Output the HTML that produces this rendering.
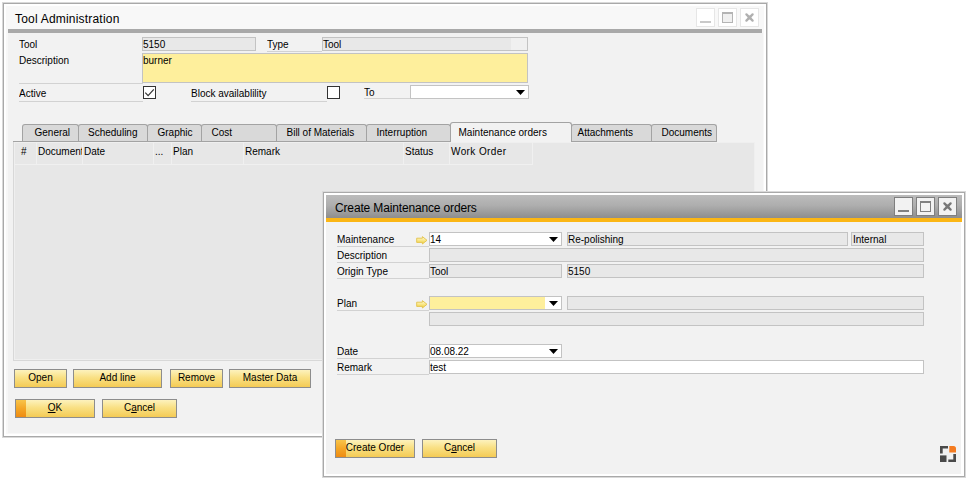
<!DOCTYPE html>
<html><head><meta charset="utf-8"><title>Tool Administration</title>
<style>
*{box-sizing:border-box;margin:0;padding:0}
html,body{width:967px;height:480px;background:#fff;overflow:hidden}
body{position:relative;font-family:"Liberation Sans",sans-serif;font-size:10px;color:#000;line-height:12px}
.a{position:absolute;white-space:nowrap}
.win{position:absolute;border:1px solid #a9a9a9;box-shadow:0 0 0 1px #d9d9d9;background:#fff}
.body{position:absolute;background:#f2f2f2}
.lbl{position:absolute;height:14px;border-bottom:1px solid #d2d2d2;padding-top:2px;white-space:nowrap;overflow:hidden}
.fld{position:absolute;height:14px;border:1px solid #c3c3c3;background:#e8e8e8;padding-left:0;padding-top:1px;white-space:nowrap;overflow:hidden}
.w{background:#fff}.y{background:#feef9c}
.btn{position:absolute;height:19px;border:1px solid #8d8d8d;background:linear-gradient(#fdf2bd 0%,#f9e084 45%,#f4cb55 100%);text-align:center;line-height:16px;white-space:nowrap}
.def:before{content:"";position:absolute;left:0;top:0;bottom:0;width:10px;background:linear-gradient(#f8c44a 0%,#f4a626 50%,#ef8c12 100%)}
.tab{position:absolute;top:124px;height:18px;text-align:left;border:1px solid #a3a3a3;border-bottom:none;border-radius:3px 3px 0 0;background:#d9d9d9;line-height:15px;white-space:nowrap}
.tab.sel{background:#f2f2f2;top:122px;height:20px;line-height:19px;z-index:2}
.arr{position:absolute;width:9px;height:5px;background:#000;clip-path:polygon(0 0,100% 0,50% 100%)}
.cb{position:absolute;width:13px;height:13px;border:1px solid #333;background:#fff}
.tb{position:absolute;width:19px;height:19px}
u{text-decoration:underline}
</style></head><body>

<!-- Window 1 -->
<div class="win" style="left:3px;top:3px;width:764px;height:434px"></div>
<div class="a" style="left:6px;top:6px;width:758px;height:428px;background:#f8f8f8"></div>
<div class="a" style="left:15px;top:12px;font-size:12px;letter-spacing:0.2px;line-height:15px">Tool Administration</div>
<div class="a" style="left:8px;top:29px;width:754px;height:4px;background:#a9a9a9"></div>
<div class="body" style="left:8px;top:33px;width:755px;height:400px"></div>
<!-- title buttons 1 -->
<div class="tb" style="left:696px;top:8px;border:1px solid #e6e6e6;background:#fff"><div class="a" style="left:3px;top:12px;width:11px;height:2px;background:#c9c9c9"></div></div>
<div class="tb" style="left:718px;top:8px;border:1px solid #e6e6e6;background:#fff"><div class="a" style="left:3px;top:3px;width:11px;height:11px;border:1px solid #b4b4b4;border-top-width:2px;background:#f0f0f0"></div></div>
<div class="tb" style="left:740px;top:8px;border:1px solid #e6e6e6;background:#fff"><svg class="a" style="left:3px;top:3px" width="11" height="11" viewBox="0 0 11 11"><path d="M2.4 2.4 L8.6 8.6 M8.6 2.4 L2.4 8.6" stroke="#b0b0b0" stroke-width="2.3" stroke-linecap="round"/><rect x="3.7" y="3.7" width="3.6" height="3.6" fill="#b0b0b0"/></svg></div>

<div class="lbl" style="left:19px;top:37px;width:123px;border-bottom:none">Tool</div>
<div class="fld" style="left:142px;top:37px;width:114px">5150</div>
<div class="lbl" style="left:267px;top:37px;width:55px;height:15px">Type</div>
<div class="fld" style="left:322px;top:37px;width:206px">Tool</div>
<div class="a" style="left:511px;top:38px;width:16px;height:12px;background:#f0f0f0"></div>
<div class="lbl" style="left:19px;top:53px;width:124px;height:31px">Description</div>
<div class="fld y" style="left:142px;top:53px;width:386px;height:30px">burner</div>
<div class="lbl" style="left:19px;top:85px;width:124px;height:17px;padding-top:3px">Active</div>
<div class="cb" style="left:143px;top:86px"><svg class="a" style="left:0;top:0" width="11" height="11" viewBox="0 0 11 11"><path d="M1.3 5.6 L4.1 8.6 L9.8 2.3" stroke="#333" stroke-width="1.2" fill="none"/></svg></div>
<div class="lbl" style="left:191px;top:85px;width:136px;height:17px;padding-top:3px">Block availablility</div>
<div class="cb" style="left:327px;top:86px"></div>
<div class="lbl" style="left:364px;top:85px;width:46px">To</div>
<div class="fld w" style="left:410px;top:85px;width:119px"></div>
<div class="arr" style="left:516px;top:90px"></div>

<!-- tabs -->
<div class="tab" style="left:22px;width:57px;padding-left:11.5px">General</div>
<div class="tab" style="left:78px;width:70px;padding-left:9.0px">Scheduling</div>
<div class="tab" style="left:147px;width:55px;padding-left:9.5px">Graphic</div>
<div class="tab" style="left:201px;width:76px;padding-left:9.5px">Cost</div>
<div class="tab" style="left:276px;width:91px;padding-left:9.5px">Bill of Materials</div>
<div class="tab" style="left:366px;width:85px;padding-left:9.5px">Interruption</div>
<div class="tab sel" style="left:450px;width:122px;padding-left:7.5px">Maintenance orders</div>
<div class="tab" style="left:571px;width:81px;padding-left:5.5px">Attachments</div>
<div class="tab" style="left:651px;width:66px;padding-left:9.5px">Documents</div>

<!-- grid -->
<div class="a" style="left:13px;top:142px;width:742px;height:219px;background:#e7e7e7;border-left:1px solid #d8d8d8;border-bottom:1px solid #d8d8d8"></div>
<div class="a" style="left:14px;top:142px;width:741px;height:218px;border:1px solid #efefef"></div>
<div class="a" style="left:13px;top:141px;width:704px;height:1px;background:#a3a3a3"></div>
<div class="a" style="left:14px;top:142px;width:519px;height:23px;border-bottom:1px solid #f0f0f0;border-right:1px solid #f0f0f0"></div>
<div class="a" style="left:36px;top:142px;width:1px;height:22px;background:#f0f0f0"></div>
<div class="a" style="left:82px;top:142px;width:1px;height:22px;background:#f0f0f0"></div>
<div class="a" style="left:153px;top:142px;width:1px;height:22px;background:#f0f0f0"></div>
<div class="a" style="left:171px;top:142px;width:1px;height:22px;background:#f0f0f0"></div>
<div class="a" style="left:243px;top:142px;width:1px;height:22px;background:#f0f0f0"></div>
<div class="a" style="left:403px;top:142px;width:1px;height:22px;background:#f0f0f0"></div>
<div class="a" style="left:449px;top:142px;width:1px;height:22px;background:#f0f0f0"></div>
<div class="a" style="left:21px;top:146px">#</div>
<div class="a" style="left:38px;top:146px;width:44px;overflow:hidden">Document</div>
<div class="a" style="left:84px;top:146px">Date</div>
<div class="a" style="left:155px;top:146px">...</div>
<div class="a" style="left:173px;top:146px">Plan</div>
<div class="a" style="left:245px;top:146px">Remark</div>
<div class="a" style="left:405px;top:146px">Status</div>
<div class="a" style="left:451px;top:146px;letter-spacing:0.4px">Work Order</div>

<!-- buttons 1 -->
<div class="btn" style="left:14px;top:369px;width:53px">Open</div>
<div class="btn" style="left:73px;top:369px;width:89px">Add line</div>
<div class="btn" style="left:170px;top:369px;width:53px">Remove</div>
<div class="btn" style="left:229px;top:369px;width:82px">Master Data</div>
<div class="btn def" style="left:15px;top:399px;width:80px"><u>O</u>K</div>
<div class="btn" style="left:102px;top:399px;width:75px">C<u>a</u>ncel</div>

<!-- Window 2 -->
<div class="win" style="left:323px;top:192px;width:642px;height:285px"></div>
<div class="a" style="left:326px;top:195px;width:636px;height:23px;background:linear-gradient(#bcbcbc,#aeaeae 45%,#8e8e8e)"></div>
<div class="a" style="left:326px;top:218px;width:636px;height:4px;background:#fbb615"></div>
<div class="body" style="left:326px;top:222px;width:635px;height:252px"></div>
<div class="a" style="left:335px;top:201px;font-size:12px;letter-spacing:-0.15px;line-height:15px">Create Maintenance orders</div>
<!-- title buttons 2 -->
<div class="tb" style="left:894px;top:197px;border:1px solid #7f7f7f;background:#f2f2f2"><div class="a" style="left:3px;top:12px;width:11px;height:2px;background:#808080"></div></div>
<div class="tb" style="left:916px;top:197px;border:1px solid #7f7f7f;background:#f2f2f2"><div class="a" style="left:3px;top:3px;width:11px;height:11px;border:1px solid #808080;border-top-width:2px;background:#f2f2f2"></div></div>
<div class="tb" style="left:938px;top:197px;border:1px solid #7f7f7f;background:#f2f2f2"><svg class="a" style="left:3px;top:3px" width="11" height="11" viewBox="0 0 11 11"><path d="M2.4 2.4 L8.6 8.6 M8.6 2.4 L2.4 8.6" stroke="#777" stroke-width="2.3" stroke-linecap="round"/><rect x="3.7" y="3.7" width="3.6" height="3.6" fill="#777"/></svg></div>

<div class="lbl" style="left:337px;top:233px;width:92px;padding-top:1px">Maintenance</div>
<div class="fld w" style="left:429px;top:232px;width:133px">14</div>
<div class="arr" style="left:549px;top:237px"></div>
<div class="fld" style="left:567px;top:232px;width:281px">Re-polishing</div>
<div class="fld" style="left:851px;top:232px;width:73px;padding-left:1px">Internal</div>
<div class="lbl" style="left:337px;top:249px;width:92px;padding-top:1px">Description</div>
<div class="fld" style="left:429px;top:248px;width:495px"></div>
<div class="lbl" style="left:337px;top:265px;width:92px;padding-top:1px">Origin Type</div>
<div class="fld" style="left:429px;top:264px;width:133px">Tool</div>
<div class="fld" style="left:567px;top:264px;width:357px">5150</div>

<div class="lbl" style="left:337px;top:297px;width:92px;padding-top:1px">Plan</div>
<div class="fld y" style="left:429px;top:296px;width:133px"></div>
<div class="a" style="left:545px;top:297px;width:16px;height:12px;background:#fff"></div>
<div class="arr" style="left:549px;top:301px"></div>
<div class="fld" style="left:567px;top:296px;width:357px"></div>
<div class="fld" style="left:429px;top:312px;width:495px"></div>

<div class="lbl" style="left:337px;top:345px;width:92px;padding-top:1px">Date</div>
<div class="fld w" style="left:429px;top:344px;width:133px">08.08.22</div>
<div class="arr" style="left:549px;top:349px"></div>
<div class="lbl" style="left:337px;top:361px;width:92px;padding-top:1px">Remark</div>
<div class="fld w" style="left:429px;top:360px;width:495px">test</div>

<!-- link arrows -->
<svg class="a" style="left:416px;top:235px" width="12" height="10" viewBox="0 0 12 10"><defs><linearGradient id="g235" x1="0" y1="0" x2="0" y2="1"><stop offset="0.2" stop-color="#fdf4b8"/><stop offset="0.9" stop-color="#f3d449"/></linearGradient></defs><path d="M0.7 3.2 H6.4 V1.6 L11 5.3 L6.4 9 V7.4 H0.7 Z" fill="url(#g235)" stroke="#e3c24a" stroke-width="0.9" stroke-linejoin="round"/></svg>
<svg class="a" style="left:416px;top:299px" width="12" height="10" viewBox="0 0 12 10"><defs><linearGradient id="g299" x1="0" y1="0" x2="0" y2="1"><stop offset="0.2" stop-color="#fdf4b8"/><stop offset="0.9" stop-color="#f3d449"/></linearGradient></defs><path d="M0.7 3.2 H6.4 V1.6 L11 5.3 L6.4 9 V7.4 H0.7 Z" fill="url(#g299)" stroke="#e3c24a" stroke-width="0.9" stroke-linejoin="round"/></svg>

<div class="btn def" style="left:335px;top:439px;width:80px;">Create Order</div>
<div class="btn" style="left:422px;top:439px;width:75px">C<u>a</u>ncel</div>

<!-- resize icon -->
<svg class="a" style="left:940px;top:446px" width="16" height="16" viewBox="0 0 16 16">
<path d="M0 0 H8 V2.6 H2.7 V7.5 H0 Z" fill="#4a4a4a"/>
<path d="M9.3 0 H13.5 A2.5 2.5 0 0 1 16 2.5 V6.5 H9.3 Z" fill="#f47b20"/>
<rect x="0" y="9.4" width="6.5" height="6.6" fill="#4a4a4a"/>
<path d="M16 8 V16 H8.3 V13.4 H13.3 V8 Z" fill="#4a4a4a"/>
</svg>
</body></html>
